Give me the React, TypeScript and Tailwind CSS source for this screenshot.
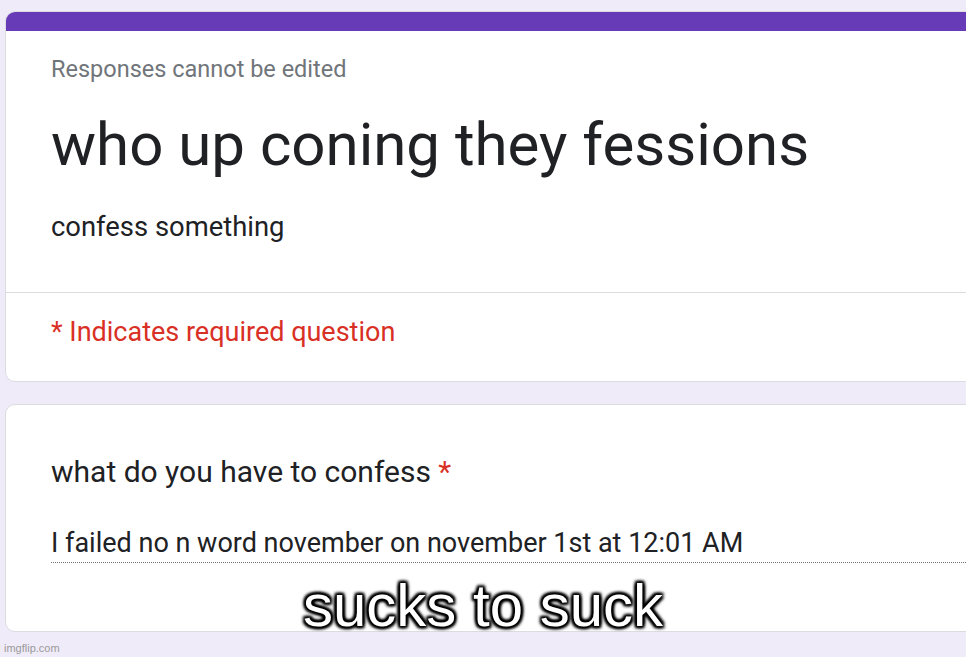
import React from "react";

function App() {
    return (
        <div className="relative w-[966px] h-[657px] overflow-hidden bg-[#f0ebf8] font-['Roboto',sans-serif]">
            <div className="pt-[11px] pl-[5px] flex flex-col gap-[22px]">
                {/* header card */}
                <div className="w-[1000px] rounded-[10px] bg-white border border-[#dadce0] overflow-hidden">
                    <div className="h-[19px] bg-[#673ab7]"></div>
                    <div className="pl-[45px] pt-[24px] pb-[49px] flex flex-col">
                        <p className="text-[23.5px] leading-[28px] text-[#70757a]">Responses cannot be edited</p>
                        <h1 className="mt-[26px] text-[60px] leading-[72px] text-[#202124]">who up coning they fessions</h1>
                        <p className="mt-[30px] text-[27.4px] leading-[32px] text-[#202124]">confess something</p>
                    </div>
                    <div className="border-t border-[#dadce0] pl-[45px] pt-[23px] pb-[33px]">
                        <p className="text-[27px] leading-[32px] text-[#d93025]">* Indicates required question</p>
                    </div>
                </div>

                {/* question card */}
                <div className="w-[1000px] h-[228px] rounded-[10px] bg-white border border-[#dadce0] pl-[45px] pt-[49px]">
                    <p className="text-[30px] leading-[36px] text-[#202124]">
                        what do you have to confess <span className="text-[#d93025]">*</span>
                    </p>
                    <div className="mt-[37px] pb-[3px] border-b border-dotted border-[#70757a]">
                        <p className="text-[27px] leading-[32px] text-[#202124]">I failed no n word november on november 1st at 12:01 AM</p>
                    </div>
                </div>
            </div>

            {/* meme caption */}
            <p className="absolute left-0 right-0 top-[576px] text-center font-['Liberation_Sans',Arial,sans-serif] text-[60px] leading-[60px] text-white [text-shadow:0_0_3px_#000,0_0_3px_#000,0_0_4px_#000,0_0_5px_#000,2px_2px_3px_#000,-2px_-2px_3px_#000,2px_-2px_3px_#000,-2px_2px_3px_#000]">
                sucks to suck
            </p>

            <p className="absolute left-[4px] top-[641px] font-['Liberation_Sans',Arial,sans-serif] text-[11px] leading-[14px] text-[#9a9a9a]">imgflip.com</p>
        </div>
    );
}

export default App;
